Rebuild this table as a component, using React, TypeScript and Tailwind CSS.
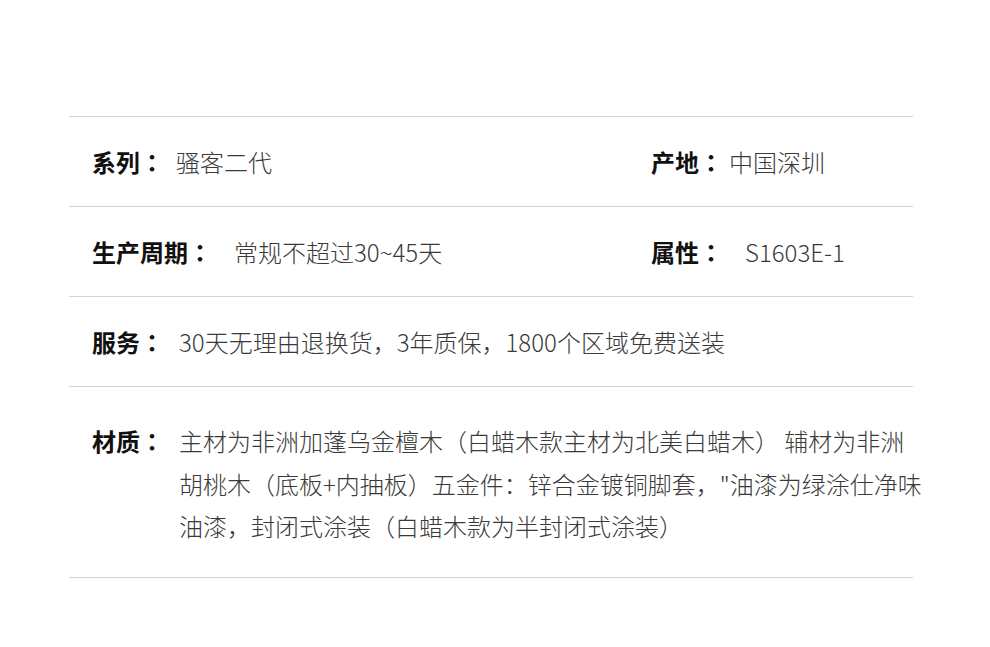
import React from "react";

const font = { fontFamily: '"Noto Sans CJK SC", "Noto Sans", sans-serif' };
const labelFont = { fontFamily: '"Noto Sans CJK TC", "Noto Sans CJK SC", sans-serif' };

function Item({ label, value, gap }: { label: string; value: string; gap: string }) {
  return (
    <div className="flex items-center whitespace-nowrap">
      <span className="font-bold text-[#111]" style={labelFont}>
        {label}
      </span>
      <span className={`${gap} font-light text-[#3a3a3a]`}>{value}</span>
    </div>
  );
}

export default function App() {
  return (
    <div className="w-[990px] h-[647px] bg-white text-[24px] leading-none" style={font}>
      <div className="pt-[116px] mx-[69px] w-[844px]">
        <div className="h-[90px] border-t border-[#d4d4d4] flex items-center pl-[23px]">
          <div className="w-[559px]">
            <Item label="系列：" value="骚客二代" gap="ml-[12px]" />
          </div>
          <Item label="产地：" value="中国深圳" gap="ml-[6px]" />
        </div>
        <div className="h-[90px] border-t border-[#d4d4d4] flex items-center pl-[23px]">
          <div className="w-[559px]">
            <Item label="生产周期：" value="常规不超过30~45天" gap="ml-[22px]" />
          </div>
          <Item label="属性：" value="S1603E-1" gap="ml-[22px]" />
        </div>
        <div className="h-[90px] border-t border-[#d4d4d4] flex items-center pl-[23px]">
          <Item label="服务：" value="30天无理由退换货，3年质保，1800个区域免费送装" gap="ml-[15px]" />
        </div>
        <div className="h-[192px] border-t border-b border-[#d4d4d4] flex items-start pl-[23px] pt-[33px] leading-[42.5px]">
          <span className="font-bold text-[#111] whitespace-nowrap" style={labelFont}>
            材质：
          </span>
          <div className="ml-[15px] font-light text-[#3a3a3a] whitespace-nowrap">
            <div>主材为非洲加蓬乌金檀木（白蜡木款主材为北美白蜡木） 辅材为非洲</div>
            <div>胡桃木（底板+内抽板）五金件：锌合金镀铜脚套，"油漆为绿涂仕净味</div>
            <div>油漆，封闭式涂装（白蜡木款为半封闭式涂装）</div>
          </div>
        </div>
      </div>
    </div>
  );
}
